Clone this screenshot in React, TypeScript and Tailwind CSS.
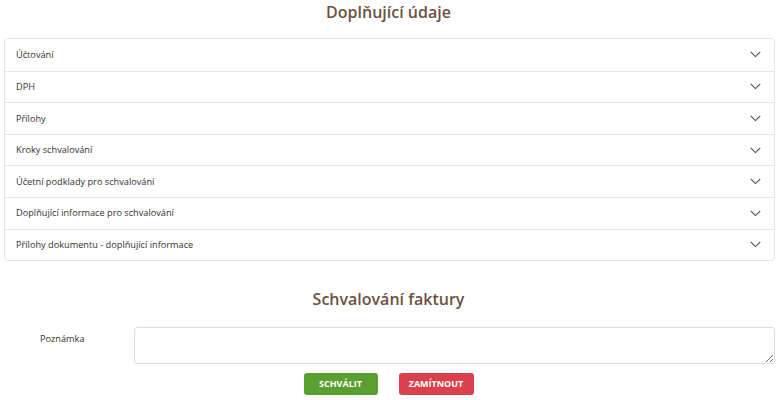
import React from "react";

const items = [
  "Účtování",
  "DPH",
  "Přílohy",
  "Kroky schvalování",
  "Účetní podklady pro schvalování",
  "Doplňující informace pro schvalování",
  "Přílohy dokumentu - doplňující informace",
];

function Chevron() {
  return (
    <svg width="11" height="7" viewBox="0 0 11 7" fill="none">
      <path d="M0.8 1 L5.5 5.6 L10.2 1" stroke="#555" strokeWidth="1.05" />
    </svg>
  );
}

export default function App() {
  return (
    <div
      className="w-[777px] h-[400px] bg-white overflow-hidden"
      style={{ fontFamily: '"Open Sans", "Noto Sans", sans-serif' }}
    >
      <h2 className="text-center text-[16px] leading-[24px] font-semibold text-[#6b5241] h-[38px]">
        Doplňující údaje
      </h2>
      <div className="mx-[4px] border border-[#e6e6e6] rounded-[4px] w-[771px]">
        {items.map((t, i) => (
          <div
            key={t}
            className={`flex items-center justify-between h-[31.6px] pl-[11px] pr-[13px] ${
              i > 0 ? "border-t border-[#e6e6e6]" : ""
            }`}
          >
            <span className="text-[9.2px] text-[#333]">{t}</span>
            <Chevron />
          </div>
        ))}
      </div>
      <h2 className="text-center text-[16px] leading-[24px] font-semibold text-[#6b5241] mt-[26px] h-[40px]">
        Schvalování faktury
      </h2>
      <div className="flex items-start">
        <div className="w-[134px] pl-[40px] pt-[5px] text-[9.2px] text-[#333]">Poznámka</div>
        <textarea className="w-[641px] h-[37px] border border-[#dcdcdc] rounded-[3px] resize-y" />
      </div>
      <div className="flex justify-center gap-[21px] mt-[9px]">
        <button className="w-[74px] h-[22px] rounded-[3px] bg-[#5a9f31] text-white text-[9px] font-bold">
          SCHVÁLIT
        </button>
        <button className="w-[75px] h-[22px] rounded-[3px] bg-[#dc404c] text-white text-[9px] font-bold">
          ZAMÍTNOUT
        </button>
      </div>
    </div>
  );
}
